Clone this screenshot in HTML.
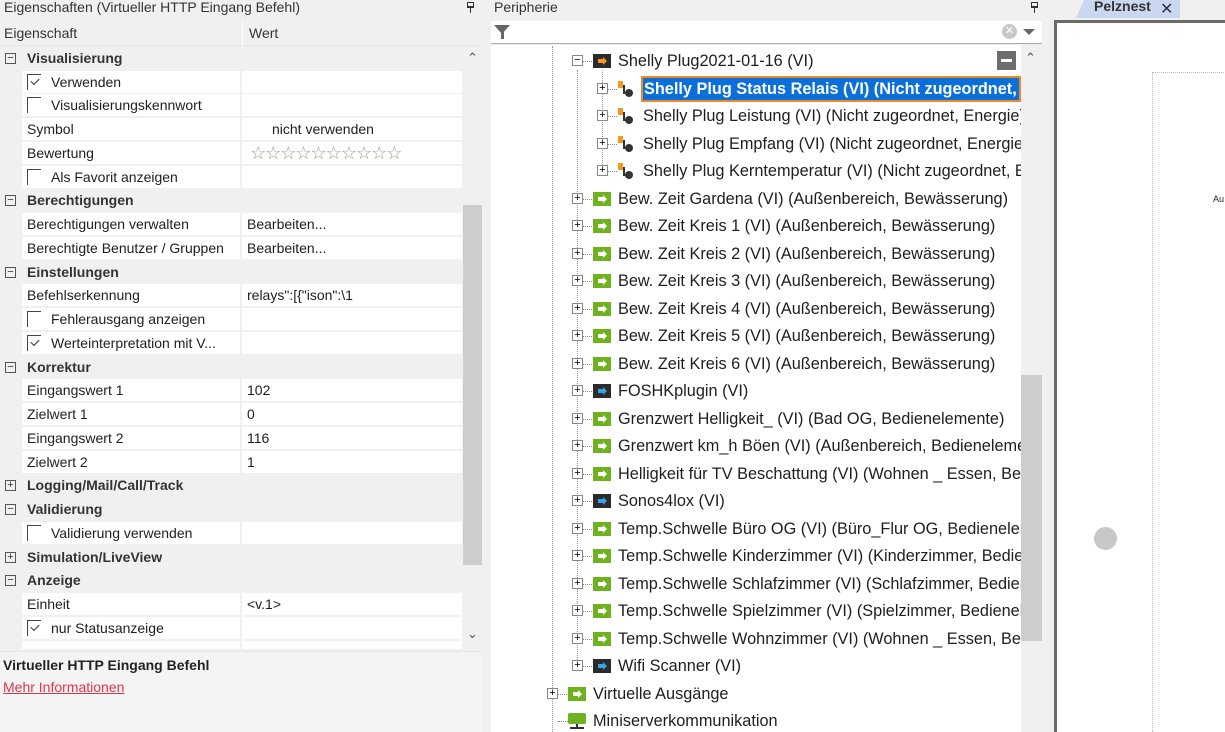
<!DOCTYPE html>
<html><head><meta charset="utf-8"><style>
*{margin:0;padding:0;box-sizing:border-box}
html,body{width:1225px;height:732px;overflow:hidden}
body{background:#f0f0f0;font-family:"Liberation Sans",sans-serif;position:relative;color:#1e1e1e}
.a{position:absolute;white-space:nowrap}
.lp{font-size:14px}
.r{position:absolute;left:0;width:462px;height:23px;line-height:23px;font-size:14px}
.cat{background:#f0f0f0;font-weight:bold;color:#333}
.cat .t{position:absolute;left:27px}
.cat .b{position:absolute;left:5px;top:6px;width:11px;height:11px;border:1px solid #555;font-weight:normal;font-size:11px;line-height:8px;text-align:center}
.it{background:#f0f0f0}
.it .n{position:absolute;left:22px;width:218px;height:22px;background:#fff;padding-left:5px}
.it .v{position:absolute;left:242px;width:220px;height:22px;background:#fff;padding-left:5px}
.cb{display:inline-block;position:relative;width:14px;height:16px;border-left:1px solid #444;border-top:1px solid #444;vertical-align:-3px;margin-right:10px}
.cb.k:after{content:"";position:absolute;left:3px;top:3px;width:7px;height:4px;border-left:1px solid #333;border-bottom:1px solid #333;transform:rotate(-45deg)}
.tr{position:absolute;font-size:16.3px;height:26px;line-height:26px;white-space:nowrap;left:0}
.pb{position:absolute;width:11px;height:11px;border:1px solid #888;background:#fff;font-size:11px;line-height:9px;text-align:center;color:#000}
.gi{position:absolute;width:18px;height:14px;background:#6fb21f}
.gi:after{content:"";position:absolute;left:5px;top:5px;width:5px;height:4px;background:#fff}
.gi:before{content:"";position:absolute;left:10px;top:3px;border-left:4px solid #fff;border-top:4px solid transparent;border-bottom:4px solid transparent}
.di{position:absolute;width:18px;height:14px;background:#2b2b2b}
.di:after{content:"";position:absolute;left:5px;top:5px;width:5px;height:4px;background:#3aa0e8}
.di:before{content:"";position:absolute;left:10px;top:3px;border-left:4px solid #3aa0e8;border-top:4px solid transparent;border-bottom:4px solid transparent}
.oi:after{background:#f39a1e}.oi:before{border-left-color:#f39a1e}
.dot{position:absolute;border-top:1px dotted #888;height:0}
.pin{position:absolute;width:7px;height:6px;border:1px solid #333;border-bottom-width:2px}
.pin:after{content:"";position:absolute;left:2px;top:5px;width:1px;height:5px;background:#333}
</style></head><body>
<div class="a lp" style="left:4px;top:-1px;color:#333">Eigenschaften (Virtueller HTTP Eingang Befehl)</div>
<div class="pin" style="left:467px;top:2px"></div>
<div class="a" style="left:0;top:21px;width:482px;height:25px;background:#f0f0f0;border-bottom:1px solid #e3e3e3"></div>
<div class="a" style="left:242px;top:21px;width:1px;height:25px;background:#fff"></div>
<div class="a lp" style="left:4px;top:25px;color:#333">Eigenschaft</div>
<div class="a lp" style="left:249px;top:25px;color:#333">Wert</div>
<div class="a" style="left:0;top:46px;width:482px;height:600px;background:#f0f0f0"></div>

<div class="r cat" style="top:47px"><span class="b">−</span><span class="t">Visualisierung</span></div>
<div class="r it" style="top:71px"><span class="n"><span class="cb k"></span>Verwenden</span><span class="v"></span></div>
<div class="r it" style="top:94px"><span class="n"><span class="cb"></span>Visualisierungskennwort</span><span class="v"></span></div>
<div class="r it" style="top:118px"><span class="n">Symbol</span><span class="v" style="padding-left:30px">nicht verwenden</span></div>
<div class="r it" style="top:142px"><span class="n">Bewertung</span><span class="v" style="color:#a29b80;letter-spacing:-1px;font-size:18px;padding-left:8px;line-height:22px">☆☆☆☆☆☆☆☆☆☆</span></div>
<div class="r it" style="top:166px"><span class="n"><span class="cb"></span>Als Favorit anzeigen</span><span class="v"></span></div>
<div class="r cat" style="top:189px"><span class="b">−</span><span class="t">Berechtigungen</span></div>
<div class="r it" style="top:213px"><span class="n">Berechtigungen verwalten</span><span class="v">Bearbeiten...</span></div>
<div class="r it" style="top:237px"><span class="n">Berechtigte Benutzer / Gruppen</span><span class="v">Bearbeiten...</span></div>
<div class="r cat" style="top:261px"><span class="b">−</span><span class="t">Einstellungen</span></div>
<div class="r it" style="top:284px"><span class="n">Befehlserkennung</span><span class="v">relays":[{"ison":\1</span></div>
<div class="r it" style="top:308px"><span class="n"><span class="cb"></span>Fehlerausgang anzeigen</span><span class="v"></span></div>
<div class="r it" style="top:332px"><span class="n"><span class="cb k"></span>Werteinterpretation mit V...</span><span class="v"></span></div>
<div class="r cat" style="top:356px"><span class="b">−</span><span class="t">Korrektur</span></div>
<div class="r it" style="top:379px"><span class="n">Eingangswert 1</span><span class="v">102</span></div>
<div class="r it" style="top:403px"><span class="n">Zielwert 1</span><span class="v">0</span></div>
<div class="r it" style="top:427px"><span class="n">Eingangswert 2</span><span class="v">116</span></div>
<div class="r it" style="top:451px"><span class="n">Zielwert 2</span><span class="v">1</span></div>
<div class="r cat" style="top:474px"><span class="b">+</span><span class="t">Logging/Mail/Call/Track</span></div>
<div class="r cat" style="top:498px"><span class="b">−</span><span class="t">Validierung</span></div>
<div class="r it" style="top:522px"><span class="n"><span class="cb"></span>Validierung verwenden</span><span class="v"></span></div>
<div class="r cat" style="top:546px"><span class="b">+</span><span class="t">Simulation/LiveView</span></div>
<div class="r cat" style="top:569px"><span class="b">−</span><span class="t">Anzeige</span></div>
<div class="r it" style="top:593px"><span class="n">Einheit</span><span class="v">&lt;v.1&gt;</span></div>
<div class="r it" style="top:617px"><span class="n"><span class="cb k"></span>nur Statusanzeige</span><span class="v"></span></div>
<div class="r it" style="top:641px;height:8px"><span class="n" style="height:8px"></span><span class="v" style="height:8px"></span></div>
<div class="a" style="left:463px;top:205px;width:19px;height:360px;background:#cdcdcd"></div>
<div class="a" style="left:467px;top:50px;font-size:13px;color:#555">⌃</div>
<div class="a" style="left:467px;top:626px;font-size:13px;color:#555">⌄</div>
<div class="a" style="left:0;top:651px;width:482px;height:81px;background:#f4f4f4;border-top:1px solid #e6e6e6"></div>
<div class="a lp" style="left:3px;top:657px;font-weight:bold;color:#222">Virtueller HTTP Eingang Befehl</div>
<div class="a lp" style="left:3px;top:679px;color:#e0344a;text-decoration:underline">Mehr Informationen</div>

<div class="a lp" style="left:494px;top:-1px;color:#333">Peripherie</div>
<div class="pin" style="left:1031px;top:2px"></div>
<div class="a" style="left:491px;top:21px;width:551px;height:23px;background:#fff;border-bottom:1px solid #aaa"></div>
<div class="a" style="left:494px;top:25px;width:0;height:0;border-left:8px solid transparent;border-right:8px solid transparent;border-top:9px solid #666"></div>
<div class="a" style="left:501px;top:32px;width:3px;height:7px;background:#666"></div>
<div class="a" style="left:1002px;top:24px;width:15px;height:15px;border-radius:50%;background:#c8c8c8;color:#fff;font-size:11px;line-height:15px;text-align:center">✕</div>
<div class="a" style="left:1023px;top:29px;border-left:6px solid transparent;border-right:6px solid transparent;border-top:6px solid #666"></div>
<div class="a" style="left:491px;top:45px;width:530px;height:687px;background:#fff"></div>
<div class="a" style="left:1021px;top:45px;width:21px;height:687px;background:#f0f0f0"></div>
<div class="a" style="left:1021px;top:375px;width:21px;height:266px;background:#cdcdcd"></div>
<div class="a" style="left:1025px;top:50px;font-size:13px;color:#555">⌃</div>
<div class="a" style="left:997px;top:51px;width:19px;height:19px;background:#6d6d6d"></div>
<div class="a" style="left:1001px;top:59px;width:11px;height:3px;background:#fff"></div>
<div class="a" style="left:552px;top:46px;height:686px;border-left:1px dotted #999"></div>
<div class="a" style="left:577px;top:70px;height:600px;border-left:1px dotted #999"></div>
<div class="a" style="left:602px;top:70px;height:105px;border-left:1px dotted #999"></div>

<div id="tree"></div>
<div class="a" style="left:1047px;top:0;width:178px;height:732px;background:#f0f0f0"></div>
<div class="a" style="left:1076px;top:0;width:104px;height:18px;background:#c9d8f0;clip-path:polygon(8px 0,100% 0,100% 100%,0 100%)"></div>
<div class="a" style="left:1094px;top:-2px;font-size:14px;font-weight:bold;color:#333">Pelznest</div>
<div class="a" style="left:1160px;top:-1px;font-size:16px;color:#333">✕</div>
<div class="a" style="left:1054px;top:20px;width:171px;height:712px;background:#fff;border-left:3px solid #6a6a6a;border-top:3px solid #6a6a6a"></div>
<div class="a" style="left:1152px;top:72px;width:80px;height:660px;border-left:1px dotted #bbb;border-top:1px dotted #bbb"></div>
<div class="a" style="left:1213px;top:194px;font-size:9px">Au</div>
<div class="a" style="left:1094px;top:527px;width:23px;height:23px;border-radius:50%;background:#c8c8c8"></div>
<script>
var rows=[
[1,'o','Shelly Plug2021-01-16 (VI)','−'],
[2,'s','Shelly Plug Status Relais (VI) (Nicht zugeordnet, Energie)'],
[2,'s','Shelly Plug Leistung (VI) (Nicht zugeordnet, Energie)'],
[2,'s','Shelly Plug Empfang (VI) (Nicht zugeordnet, Energie)'],
[2,'s','Shelly Plug Kerntemperatur (VI) (Nicht zugeordnet, Energie)'],
[1,'g','Bew. Zeit Gardena (VI) (Außenbereich, Bewässerung)'],
[1,'g','Bew. Zeit Kreis 1 (VI) (Außenbereich, Bewässerung)'],
[1,'g','Bew. Zeit Kreis 2 (VI) (Außenbereich, Bewässerung)'],
[1,'g','Bew. Zeit Kreis 3 (VI) (Außenbereich, Bewässerung)'],
[1,'g','Bew. Zeit Kreis 4 (VI) (Außenbereich, Bewässerung)'],
[1,'g','Bew. Zeit Kreis 5 (VI) (Außenbereich, Bewässerung)'],
[1,'g','Bew. Zeit Kreis 6 (VI) (Außenbereich, Bewässerung)'],
[1,'d','FOSHKplugin (VI)'],
[1,'g','Grenzwert Helligkeit_ (VI) (Bad OG, Bedienelemente)'],
[1,'g','Grenzwert km_h Böen (VI) (Außenbereich, Bedienelemente)'],
[1,'g','Helligkeit für TV Beschattung (VI) (Wohnen _ Essen, Bedienelemente)'],
[1,'d','Sonos4lox (VI)'],
[1,'g','Temp.Schwelle Büro OG (VI) (Büro_Flur OG, Bedienelemente)'],
[1,'g','Temp.Schwelle Kinderzimmer (VI) (Kinderzimmer, Bedienelemente)'],
[1,'g','Temp.Schwelle Schlafzimmer (VI) (Schlafzimmer, Bedienelemente)'],
[1,'g','Temp.Schwelle Spielzimmer (VI) (Spielzimmer, Bedienelemente)'],
[1,'g','Temp.Schwelle Wohnzimmer (VI) (Wohnen _ Essen, Bedienelemente)'],
[1,'d','Wifi Scanner (VI)'],
[0,'g','Virtuelle Ausgänge'],
[0,'m','Miniserverkommunikation']];
var h='';
rows.forEach(function(r,i){
 var cy=61+i*27.5, x=552+r[0]*25;
 if(r[1]!='m') h+='<div class="pb" style="left:'+(x-5)+'px;top:'+(cy-6)+'px">'+(r[3]||'+')+'</div>';
 h+='<div class="dot" style="left:'+(x+6)+'px;top:'+cy+'px;width:'+(r[1]=='m'?16:9)+'px"></div>';
 var ix=x+16, iy=cy-7;
 if(r[1]=='g') h+='<div class="gi" style="left:'+ix+'px;top:'+iy+'px"></div>';
 else if(r[1]=='d') h+='<div class="di" style="left:'+ix+'px;top:'+iy+'px"></div>';
 else if(r[1]=='o') h+='<div class="di oi" style="left:'+ix+'px;top:'+iy+'px"></div>';
 else if(r[1]=='s') h+='<div class="a" style="left:'+ix+'px;top:'+(iy-1)+'px;width:5px;height:7px;background:#f39a1e"></div><div class="a" style="left:'+(ix+5)+'px;top:'+(iy+3)+'px;width:2px;height:9px;background:#333"></div><div class="a" style="left:'+(ix+7)+'px;top:'+(iy+7)+'px;width:8px;height:8px;border-radius:50%;background:#333"></div>';
 else h+='<div class="a" style="left:'+ix+'px;top:'+(iy-1)+'px;width:18px;height:11px;background:#6fb21f;border-radius:2px"></div><div class="a" style="left:'+(ix+8)+'px;top:'+(iy+10)+'px;width:2px;height:3px;background:#333"></div><div class="a" style="left:'+(ix+2)+'px;top:'+(iy+13)+'px;width:14px;height:2px;background:#333"></div>';
 var tx=x+41;
 if(i==1) h+='<div class="tr" style="top:'+(cy-13)+'px;left:'+(tx-2)+'px;width:'+(1021-tx+2)+'px;overflow:hidden;background:#0a6fd8;color:#fff;font-weight:bold;border:2px solid #f08a24;line-height:22px;padding-left:1px">'+r[2]+'</div>';
 else h+='<div class="tr" style="top:'+(cy-13)+'px;left:'+tx+'px;width:'+(1021-tx)+'px;overflow:hidden">'+r[2]+'</div>';
});
document.getElementById('tree').innerHTML=h;
</script>
</body></html>
